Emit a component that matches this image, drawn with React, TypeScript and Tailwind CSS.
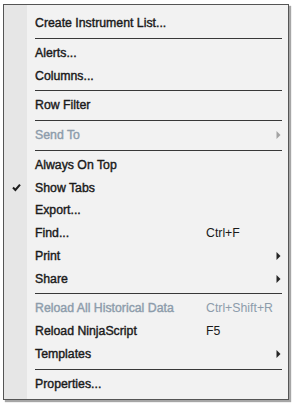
import React from 'react';

type Item =
  | { kind: 'sep' }
  | { kind: 'item'; label: string; shortcut?: string; submenu?: boolean; disabled?: boolean; checked?: boolean };

const ITEMS: Item[] = [
  { kind: 'item', label: 'Create Instrument List...' },
  { kind: 'sep' },
  { kind: 'item', label: 'Alerts...' },
  { kind: 'item', label: 'Columns...' },
  { kind: 'sep' },
  { kind: 'item', label: 'Row Filter' },
  { kind: 'sep' },
  { kind: 'item', label: 'Send To', submenu: true, disabled: true },
  { kind: 'sep' },
  { kind: 'item', label: 'Always On Top' },
  { kind: 'item', label: 'Show Tabs', checked: true },
  { kind: 'item', label: 'Export...' },
  { kind: 'item', label: 'Find...', shortcut: 'Ctrl+F' },
  { kind: 'item', label: 'Print', submenu: true },
  { kind: 'item', label: 'Share', submenu: true },
  { kind: 'sep' },
  { kind: 'item', label: 'Reload All Historical Data', shortcut: 'Ctrl+Shift+R', disabled: true },
  { kind: 'item', label: 'Reload NinjaScript', shortcut: 'F5' },
  { kind: 'item', label: 'Templates', submenu: true },
  { kind: 'sep' },
  { kind: 'item', label: 'Properties...' },
];

function Check() {
  return (
    <svg width="9" height="9" viewBox="0 0 9 9" className="ml-[8px]">
      <path d="M1 4.6 L3.4 7 L8 1.6" fill="none" stroke="#1e1e1e" strokeWidth="2.1" />
    </svg>
  );
}

function Arrow({ disabled }: { disabled?: boolean }) {
  return (
    <svg width="5" height="8" viewBox="0 0 5 8">
      <path d="M0.5 0 L4.5 4 L0.5 8 Z" fill={disabled ? '#a3a3a3' : '#262626'} />
    </svg>
  );
}

export default function App() {
  return (
    <div className="w-[294px] h-[406px] bg-white pt-[4px] pl-[3px] font-['Liberation_Sans',Arial,sans-serif]">
      <div className="w-[286px] border border-[#555555] shadow-[2px_2px_1px_rgba(0,0,0,0.35)] bg-[linear-gradient(to_right,#e6e6e6_23px,#f2f2f2_23px)] pt-[7px] pb-[4px]">
        {ITEMS.map((item, idx) => {
          if (item.kind === 'sep') {
            return (
              <div key={idx} className="h-[7px] flex items-center ml-[31px] mr-[6px]">
                <div className="h-px w-full bg-[#383838]" />
              </div>
            );
          }
          const color = item.disabled ? 'text-[#8d9cab]' : 'text-[#1a1a1a]';
          return (
            <div key={idx} className={`h-[22.75px] flex items-center text-[12.3px] ${color}`}>
              <div className="w-[31px] flex items-center">{item.checked && <Check />}</div>
              <div className="w-[171px] [-webkit-text-stroke:0.4px_currentColor] whitespace-nowrap">{item.label}</div>
              <div className="flex-1 whitespace-nowrap">{item.shortcut}</div>
              <div className="w-[12px] flex items-center">{item.submenu && <Arrow disabled={item.disabled} />}</div>
            </div>
          );
        })}
      </div>
    </div>
  );
}
